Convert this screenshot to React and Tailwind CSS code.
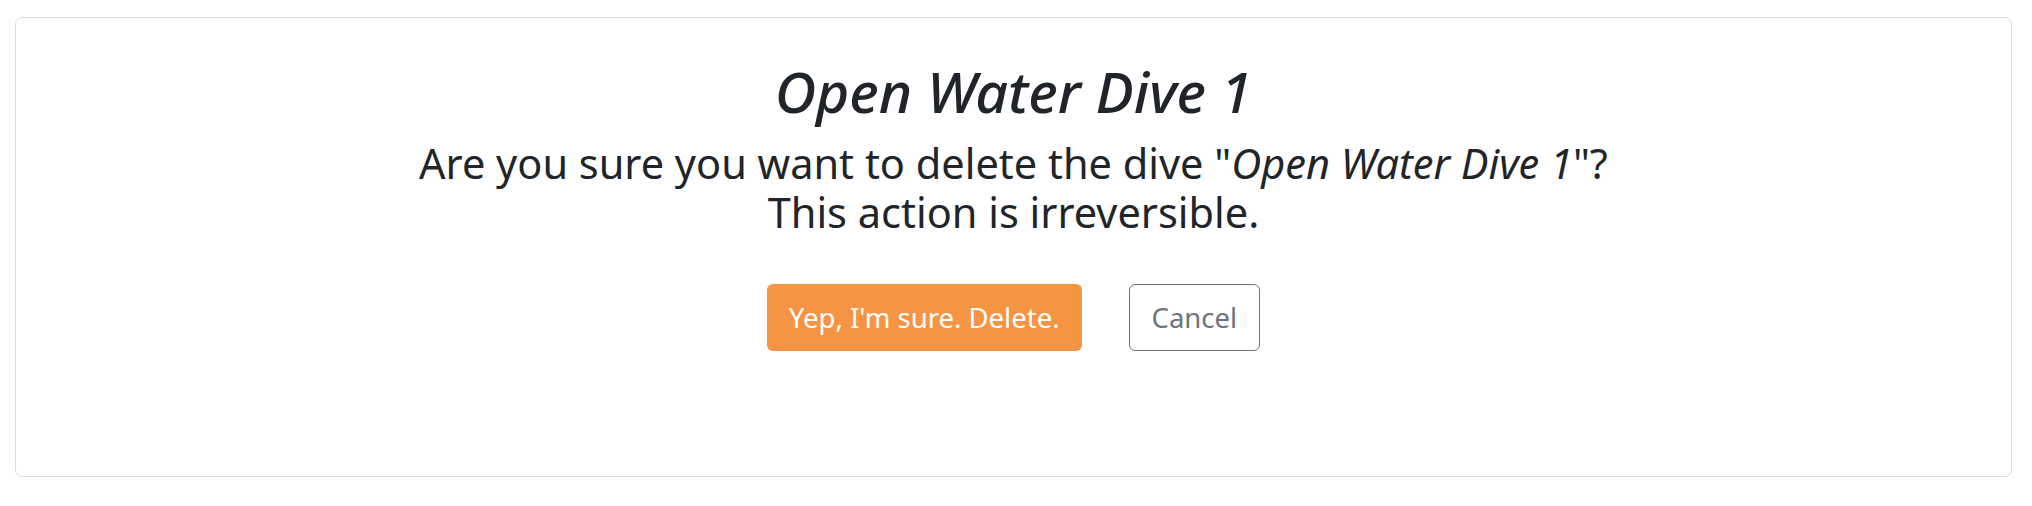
export default function App() {
    return (
        <div className="w-[2032px] h-[506px] bg-white pt-[17px] pl-[15px] pr-[20px]" style={{ fontFamily: '"Noto Sans", sans-serif' }}>
            <div className="h-[460px] border border-[#dcdcdc] rounded-[7px] flex flex-col items-center pt-[37px]">
                <h1 className="italic font-medium text-[57px] leading-[72px] text-[#212529]">Open Water Dive 1</h1>
                <p className="mt-[12px] text-center text-[41.5px] leading-[49px] text-[#212529]">
                    Are you sure you want to delete the dive "<em>Open Water Dive 1</em>"?
                    <br />
                    This action is irreversible.
                </p>
                <div className="mt-[47px] flex gap-[47px]">
                    <button className="h-[67px] px-[22px] rounded-[6px] bg-[#f59443] text-white text-[27.5px]">
                        Yep, I'm sure. Delete.
                    </button>
                    <button className="h-[67px] px-[22px] rounded-[6px] border border-[#6c757d] bg-white text-[#6c757d] text-[27.5px]">
                        Cancel
                    </button>
                </div>
            </div>
        </div>
    );
}
